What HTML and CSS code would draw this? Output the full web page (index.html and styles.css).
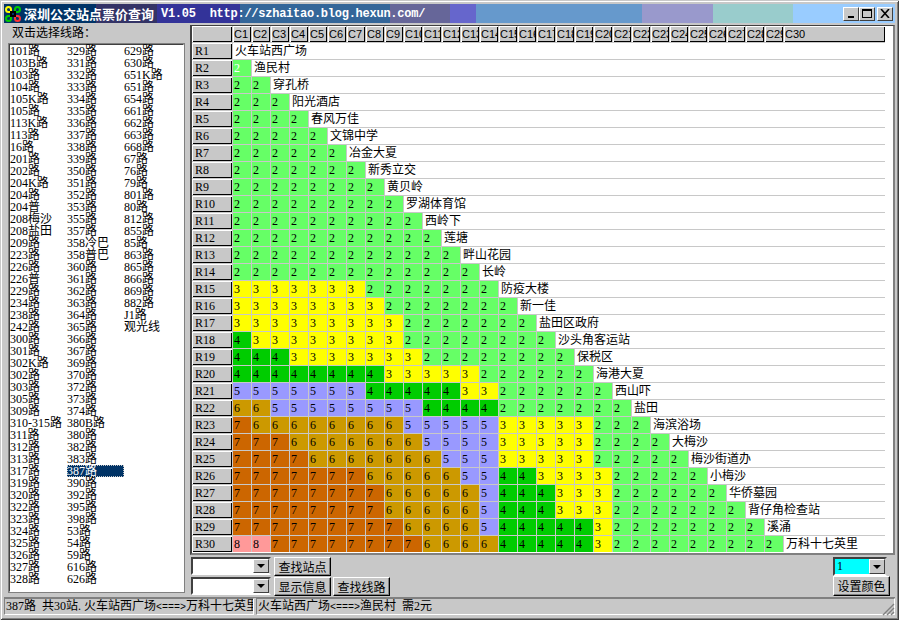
FILE: index.html
```html
<!DOCTYPE html>
<html lang="zh-CN">
<head>
    <meta charset="UTF-8">
    <title>深圳公交站点票价查询</title>
    <link rel="stylesheet" href="styles.css">
</head>
<body>
    <div class="window">
        <div class="titlebar">
            <svg class="logo" viewBox="0 0 16 16" width="16" height="16">
                <path d="M6 6H3.5A2.5 2.5 0 1 1 6 3.5V6" fill="none" stroke="#ff0" stroke-width="2"/>
                <path d="M10 6V3.5A2.5 2.5 0 1 1 12.5 6H10" fill="none" stroke="#0c0" stroke-width="2"/>
                <path d="M6 10H3.5A2.5 2.5 0 1 0 6 12.5V10" fill="none" stroke="#0c0" stroke-width="2"/>
                <path d="M10 10H12.5A2.5 2.5 0 1 1 10 12.5V10" fill="none" stroke="#f33" stroke-width="2"/>
                <path d="M6 6H10V10H6Z" fill="none" stroke="#000" stroke-width="2"/>
            </svg>
            <span class="title-cn">深圳公交站点票价查询</span>
            <span class="title-en"> V1.05  http://szhaitao.blog.hexun.com/</span>
            <div class="winbtns">
                <span class="winbtn"><i class="glyph-min"></i></span>
                <span class="winbtn"><i class="glyph-max"></i></span>
                <span class="winbtn winbtn-close">
                    <svg viewBox="0 0 10 9" width="10" height="9"><path d="M1 0L9 9M9 0L1 9" stroke="#000" stroke-width="1.6"/></svg>
                </span>
            </div>
        </div>

        <div class="content">
            <aside class="side">
                <div class="side-label">双击选择线路：</div>
                <ul class="routes" id="routes"></ul>
            </aside>

            <main class="main">
                <div class="grid-box">
                    <div class="grid" id="grid"></div>
                </div>
                <div class="controls">
                    <div class="find">
                        <div class="find-row">
                            <div class="combo"><span class="combo-arrow"></span></div>
                            <button class="btn">查找站点</button>
                        </div>
                        <div class="find-row">
                            <div class="combo"><span class="combo-arrow"></span></div>
                            <button class="btn">显示信息</button>
                            <button class="btn">查找线路</button>
                        </div>
                    </div>
                    <div class="colors">
                        <div class="combo combo-color"><span class="combo-value">1</span><span class="combo-arrow"></span></div>
                        <button class="btn btn-color">设置颜色</button>
                    </div>
                </div>
            </main>
        </div>

        <div class="status">
            <div class="status-cell status-route">387路  共30站. 火车站西广场<span class="arrow">&lt;===&gt;</span>万科十七英里</div>
            <div class="status-cell status-fare">火车站西广场<span class="arrow">&lt;===&gt;</span>渔民村  需2元</div>
            <svg class="grip" viewBox="0 0 13 13" width="13" height="13">
                <path d="M12 1L1 12M12 5L5 12M12 9L9 12" stroke="#808080" stroke-width="1.4"/>
            </svg>
        </div>
    </div>
    <script src="script.js"></script>
</body>
</html>
```

FILE: styles.css
```css
body {
    margin: 0;
    background-color: #c8c8c8;
    font-family: "Liberation Serif", "Noto Sans CJK SC", serif;
    font-size: 12px;
    color: #000000;
}

.window {
    box-sizing: border-box;
    width: 899px;
    height: 620px;
    padding: 4px;
    display: flex;
    flex-direction: column;
    overflow: hidden;
    background-color: #c8c8c8;
    box-shadow: inset 1px 1px 0 #c8c8c8, inset -1px -1px 0 #404040, inset 2px 2px 0 #ffffff, inset -2px -2px 0 #808080;
}

/* 标题栏 */
.titlebar {
    height: 19px;
    flex: none;
    display: flex;
    align-items: center;
    color: #ffffff;
    font-weight: bold;
    white-space: pre;
    background: linear-gradient(to right,
        #003366 0 92px, #333366 92px 153px, #333399 153px 236px, #336699 236px 386px,
        #666699 386px 446px, #6666cc 446px 472px, #6699cc 472px 638px, #9999cc 638px 709px,
        #99cccc 709px 789px, #99ccff 789px);
}

.logo {
    margin: 0 3px 0 1px;
    flex: none;
}

.title-cn {
    font-family: "Noto Sans CJK SC", sans-serif;
    font-size: 13px;
    line-height: 19px;
}

.title-en {
    font-family: "Liberation Mono", monospace;
    font-size: 12px;
    letter-spacing: -0.25px;
}

.winbtns {
    margin-left: auto;
    margin-right: 2px;
    display: flex;
}

.winbtn {
    box-sizing: border-box;
    width: 16px;
    height: 14px;
    display: flex;
    align-items: center;
    justify-content: center;
    background-color: #c8c8c8;
    border: 1px solid;
    border-color: #ffffff #404040 #404040 #ffffff;
}

.winbtn-close {
    margin-left: 2px;
}

.glyph-min {
    width: 6px;
    height: 2px;
    margin-top: 7px;
    background-color: #000000;
}

.glyph-max {
    box-sizing: border-box;
    width: 10px;
    height: 9px;
    border: 1px solid #000000;
    border-top-width: 2px;
}

.content {
    flex: 1;
    display: flex;
    min-height: 0;
}

/* 左侧线路列表 */
.side {
    width: 186px;
    flex: none;
}

.side-label {
    height: 20px;
    padding-left: 8px;
    line-height: 20px;
}

.routes {
    box-sizing: border-box;
    width: 177px;
    height: 550px;
    margin: 0 0 0 4px;
    padding: 0;
    list-style: none;
    display: grid;
    grid-auto-flow: column;
    grid-template-rows: repeat(45, 12px);
    grid-auto-columns: 57px;
    background-color: #ffffff;
    border: 2px solid;
    border-color: #404040 #ffffff #ffffff #404040;
    outline: 1px solid #808080;
    outline-offset: -1px;
}

.routes li {
    line-height: 12px;
    white-space: nowrap;
}

.route-selected {
    color: #ffffff;
    background-color: #003366;
    outline: 1px dotted #c8c8c8;
    outline-offset: -1px;
}

/* 票价表格 */
.main {
    flex: 1;
    min-width: 0;
    display: flex;
    flex-direction: column;
}

.grid-box {
    box-sizing: border-box;
    height: 530px;
    margin: 2px 0 0 0;
    background-color: #ffffff;
    border: 1px solid #c8c8c8;
    border-width: 1px 2px 2px 2px;
    border-top-color: #404040;
    border-left-color: #404040;
    border-right-color: #808080;
    border-bottom-color: #808080;
}

.grid {
    width: 693px;
    display: grid;
    grid-template-columns: 40px repeat(29, 18px) 101px;
    grid-auto-rows: 16px;
    gap: 1px;
    background-color: #c8c8c8;
    line-height: 16px;
}

.fixed {
    padding-left: 3px;
    overflow: hidden;
    white-space: nowrap;
    background-color: #c8c8c8;
    box-shadow: inset 1px 1px 0 #ffffff, inset -1px -1px 0 #000000;
}

.col-head {
    font-family: "Liberation Sans", "Noto Sans CJK SC", sans-serif;
    font-size: 11px;
    padding-left: 1px;
}

.cell {
    padding-left: 1px;
    overflow: hidden;
}

.p2 { background-color: #66ff66; }
.p3 { background-color: #ffff00; }
.p4 { background-color: #00cc00; }
.p5 { background-color: #9999ff; }
.p6 { background-color: #cc9900; }
.p7 { background-color: #cc6600; }
.p8 { background-color: #ff9999; }

.cell-current {
    color: #ffffff;
}

.stop {
    padding-left: 2px;
    background-color: #ffffff;
    white-space: nowrap;
}

/* 底部按钮 */
.controls {
    display: flex;
    justify-content: space-between;
    padding: 2px 5px 0 1px;
}

.find {
    display: flex;
    flex-direction: column;
    gap: 1px;
}

.find-row {
    display: flex;
    gap: 2px;
    height: 19px;
}

.combo {
    box-sizing: border-box;
    width: 80px;
    height: 18px;
    margin-right: 1px;
    display: flex;
    justify-content: flex-end;
    background-color: #ffffff;
    border: 2px solid;
    border-color: #404040 #c8c8c8 #ffffff #404040;
}

.combo-arrow {
    box-sizing: border-box;
    width: 16px;
    flex: none;
    display: flex;
    align-items: center;
    justify-content: center;
    background-color: #c8c8c8;
    border: 1px solid;
    border-color: #ffffff #404040 #404040 #ffffff;
}

.combo-arrow::before {
    content: "";
    border-style: solid;
    border-width: 4px 4px 0 4px;
    border-color: #000000 transparent transparent transparent;
}

.btn {
    box-sizing: border-box;
    width: 57px;
    height: 19px;
    padding: 0;
    font-family: "Noto Sans CJK SC", sans-serif;
    font-size: 12px;
    line-height: 14px;
    color: #000000;
    background-color: #c8c8c8;
    border: 1px solid;
    border-color: #ffffff #000000 #000000 #ffffff;
    box-shadow: inset -1px -1px 0 #808080;
}

.colors {
    width: 57px;
    display: flex;
    flex-direction: column;
}

.combo-color {
    width: 54px;
    height: 19px;
    margin-right: 0;
    background-color: #00ffff;
    justify-content: space-between;
}

.combo-value {
    padding-left: 2px;
    line-height: 15px;
}

.btn-color {
    height: 20px;
}

/* 状态栏 */
.status {
    height: 18px;
    flex: none;
    margin-top: 1px;
    display: flex;
    gap: 2px;
    position: relative;
    border-top: 1px solid #808080;
}

.status-cell {
    box-sizing: border-box;
    height: 17px;
    padding-left: 1px;
    overflow: hidden;
    white-space: pre;
    line-height: 15px;
    border: 1px solid;
    border-color: #808080 #ffffff #ffffff #808080;
}

.arrow {
    font-family: "Liberation Mono", monospace;
    font-size: 10px;
}

.status-route {
    width: 250px;
}

.status-fare {
    flex: 1;
}

.grip {
    position: absolute;
    right: 0;
    bottom: 0;
}
```

FILE: script.js
```js
// 线路列表，按列排好
const routes = [
    '101路','103B路','103路','104路','105K路','105路','113K路','113路','16路','201路','202路','204K路','204路','204普','208梅沙',
    '208盐田','209路','223路','226路','226普','229路','234路','238路','242路','300路','301路','302K路','302路','303路','305路',
    '309路','310-315路','311路','312路','313路','317路','319路','320路','322路','323路','324路','325路','326路','327路','328路',
    '329路','331路','332路','333路','334路','335路','336路','337路','338路','339路','350路','351路','352路','353路','355路',
    '357路','358冷巴','358普巴','360路','361路','362路','363路','364路','365路','366路','367路','369路','370路','372路','373路',
    '374路','380B路','380路','382路','383路','387路','390路','392路','395路','398路','53路','54路','59路','616路','626路',
    '629路','630路','651K路','651路','654路','661路','662路','663路','668路','67路','76路','79路','801路','80路','812路',
    '855路','85路','863路','865路','866路','869路','882路','J1路','观光线'
];

// 每行：站名 + 到前面各站的票价
const stops = [
    ['火车站西广场', ''],
    ['渔民村', '2'],
    ['穿孔桥', '22'],
    ['阳光酒店', '222'],
    ['春风万佳', '2222'],
    ['文锦中学', '22222'],
    ['冶金大夏', '222222'],
    ['新秀立交', '2222222'],
    ['黄贝岭', '22222222'],
    ['罗湖体育馆', '222222222'],
    ['西岭下', '2222222222'],
    ['莲塘', '22222222222'],
    ['畔山花园', '222222222222'],
    ['长岭', '2222222222222'],
    ['防疫大楼', '33333332222222'],
    ['新一佳', '333333332222222'],
    ['盐田区政府', '3333333332222222'],
    ['沙头角客运站', '43333333322222222'],
    ['保税区', '444333333322222222'],
    ['海港大夏', '4444444433333222222'],
    ['西山吓', '55555554444433222222'],
    ['盐田', '665555555544442222222'],
    ['海滨浴场', '7666666665555533333222'],
    ['大梅沙', '77766666665555333332222'],
    ['梅沙街道办', '777766666665553333322222'],
    ['小梅沙', '7777777666665544333322222'],
    ['华侨墓园', '77777777666665444333222222'],
    ['背仔角检查站', '777777776666654443332222222'],
    ['溪涌', '7777777776666544444322222222'],
    ['万科十七英里', '88777777776666444443222222222']
];

const routeList = document.getElementById('routes');
routes.forEach((name) => {
    const item = document.createElement('li');
    item.textContent = name;
    if (name === '387路') item.className = 'route-selected';
    routeList.appendChild(item);
});

const grid = document.getElementById('grid');

function addCell(className, text) {
    const cell = document.createElement('div');
    cell.className = className;
    cell.textContent = text;
    grid.appendChild(cell);
    return cell;
}

addCell('fixed', '');
for (let c = 1; c <= 30; c++) {
    addCell('fixed col-head', 'C' + c);
}

stops.forEach(([name, prices], r) => {
    addCell('fixed', 'R' + (r + 1));
    [...prices].forEach((p, c) => {
        const current = r === 1 && c === 0 ? ' cell-current' : '';
        addCell('cell p' + p + current, p);
    });
    const stop = addCell('stop', name);
    stop.style.gridColumn = (prices.length + 2) + ' / -1';
});
```
